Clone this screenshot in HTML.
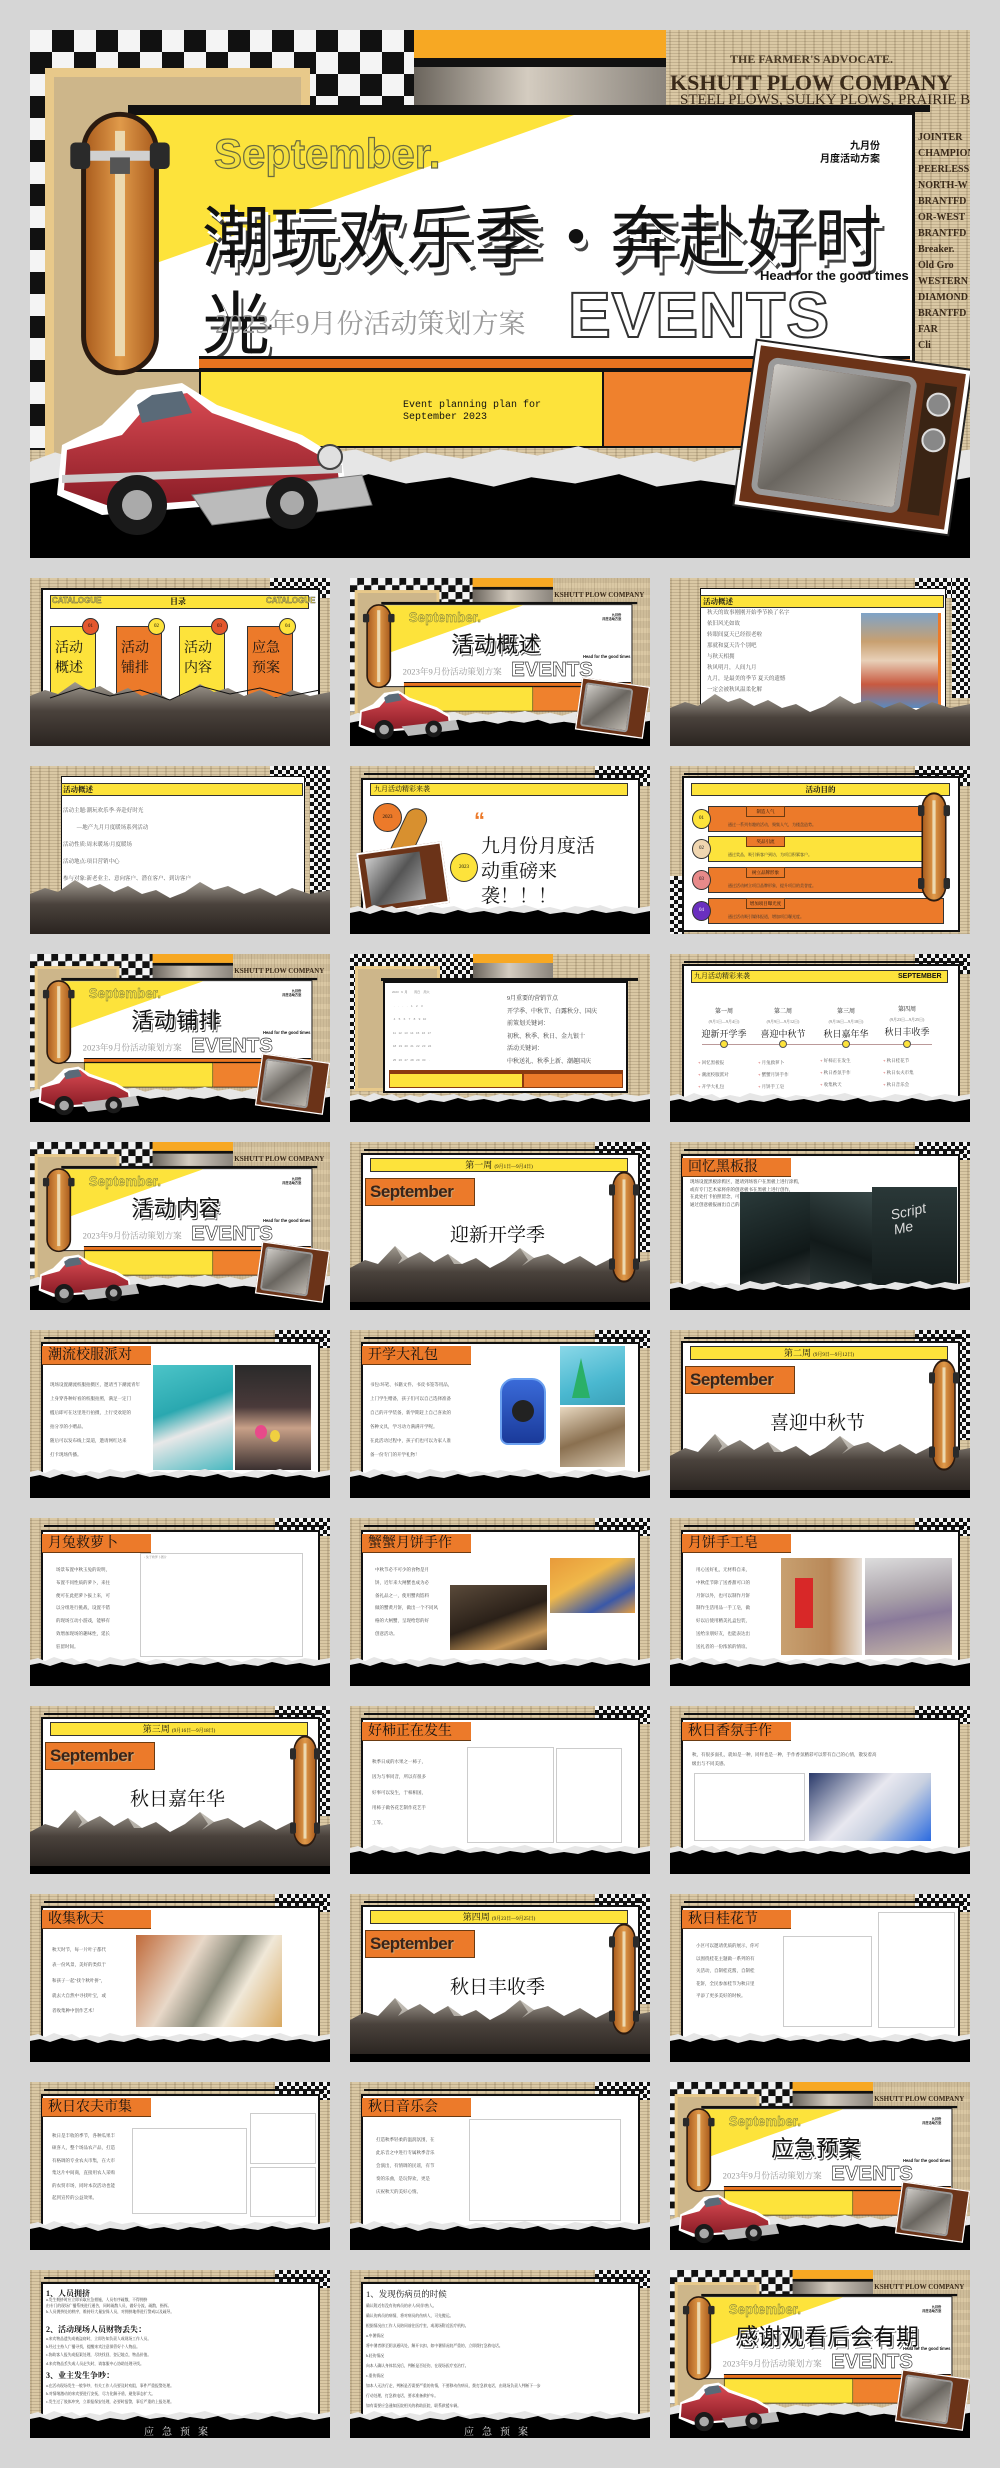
<!DOCTYPE html>
<html><head><meta charset="utf-8">
<style>
*{margin:0;padding:0;box-sizing:border-box}
body{width:1000px;height:2468px;background:#d6d6d6;position:relative;overflow:hidden;font-family:"Liberation Serif","Noto Serif CJK SC","Noto Sans CJK SC",serif;color:#111}
.a{position:absolute}
.s{position:absolute;width:300px;height:168px;overflow:hidden}
.np{background-color:#dac8a4;background-image:repeating-linear-gradient(0deg,rgba(70,50,25,.16) 0 1px,transparent 1px 3px),repeating-linear-gradient(90deg,rgba(70,50,25,.14) 0 2px,transparent 2px 9px)}
.ck{background-image:conic-gradient(#111 0 25%,#f4f4f4 0 50%,#111 0 75%,#f4f4f4 0);background-size:8px 8px}
.ckb{background-image:conic-gradient(#111 0 25%,#f4f4f4 0 50%,#111 0 75%,#f4f4f4 0);background-size:44px 44px}
.card{background:#fff;border:2px solid #111}
.tl{position:absolute;left:14px;top:7px;width:280px;height:4px;border-top:2px solid #111;border-right:2px solid #111}
.ot{position:absolute;left:12px;top:16px;width:109px;height:19px;background:#ec7a2a;border-bottom:1.5px solid #6b3b12;font-size:14px;line-height:19px;padding-left:6px;white-space:nowrap}
.yb{position:absolute;background:#fde33b;border:1.5px solid #333}
.tx{position:absolute;font-size:5.5px;line-height:11px;color:#555;white-space:pre}
.bx{position:absolute;border:1px solid #ccc;background:#fff}
.tr{position:absolute;left:0;top:138px;width:300px;height:30px}
.mt{position:absolute;left:0;width:300px}
.sans{font-family:"Liberation Sans","Noto Sans CJK SC",sans-serif}
.th{position:absolute;width:300px;height:168px;overflow:hidden}
.th .cv{transform:scale(0.31915);transform-origin:0 0}
.cv{position:absolute;left:0;top:0;width:940px;height:528px;overflow:hidden}
.sep{font-family:"Liberation Sans",sans-serif;font-weight:bold;font-size:17px;color:#3a2418;letter-spacing:-.5px;text-shadow:1px 1px 0 #c9a070}
.hd{left:730px;top:238px;font-size:13px;font-weight:bold;white-space:nowrap}
.yr{top:272px;font-size:27px;color:#9a9a9a;white-space:nowrap}
.ev{top:248px;font-size:64px;font-weight:bold;color:#fff;-webkit-text-stroke:2px #333}
.mo{left:780px;top:110px;font-size:10px;font-weight:bold;text-align:right;line-height:13px;width:70px}
</style></head><body>
<svg width="0" height="0" style="position:absolute"><defs>
<linearGradient id="mg" x1="0" y1="0" x2="0" y2="1"><stop offset="0" stop-color="#a09a90"/><stop offset=".45" stop-color="#4a423c"/><stop offset="1" stop-color="#2a2420"/></linearGradient>
<linearGradient id="sk" x1="0" y1="0" x2="1" y2="0"><stop offset="0" stop-color="#a85a1c"/><stop offset=".5" stop-color="#e09a4a"/><stop offset="1" stop-color="#a85a1c"/></linearGradient>
<linearGradient id="cr" x1="0" y1="0" x2="0" y2="1"><stop offset="0" stop-color="#d84a52"/><stop offset="1" stop-color="#8a1c26"/></linearGradient>
</defs></svg>

<!-- ========== HERO ========== -->
<div class="a" style="left:30px;top:30px;width:940px;height:528px;overflow:hidden">
<div class="cv">
 <div class="a np" style="left:0;top:0;width:940px;height:528px"></div>
 <div class="a ckb" style="left:0;top:0;width:385px;height:80px"></div>
 <div class="a ckb" style="left:0;top:0;width:45px;height:420px"></div>
 <div class="a" style="left:15px;top:38px;width:265px;height:400px;background:#cdb68a;border:9px solid #e8c98a"></div>
 <div class="a" style="left:384px;top:0;width:252px;height:28px;background:#f7a823"></div>
 <div class="a" style="left:384px;top:28px;width:252px;height:9px;background:#111"></div>
 <div class="a" style="left:384px;top:37px;width:252px;height:40px;background:linear-gradient(90deg,#6a645c,#d4ccc0 45%,#8a847c)"></div>
 <div class="a" style="left:700px;top:22px;font-size:12px;color:#4a3a26;font-weight:bold">THE FARMER'S ADVOCATE.</div>
 <div class="a" style="left:640px;top:40px;font-size:22px;color:#3a2a1a;font-weight:bold;white-space:nowrap">KSHUTT PLOW COMPANY</div>
 <div class="a" style="left:650px;top:62px;font-size:15px;color:#3a2a1a;white-space:nowrap">STEEL PLOWS, SULKY PLOWS, PRAIRIE BREAK</div>
 <div class="a" style="left:888px;top:100px;font-size:10px;color:#3a2a1a;line-height:16px;font-weight:bold;white-space:nowrap">JOINTER<br>CHAMPION<br>PEERLESS<br>NORTH-W<br>BRANTFD<br>OR-WEST<br>BRANTFD<br>Breaker.<br>Old Gro<br>WESTERN<br>DIAMOND<br>BRANTFD<br>FAR<br>Cli</div>
 <div class="a" style="left:98px;top:75px;width:802px;height:7px;background:#111"></div>
 <div class="a" style="left:98px;top:82px;width:787px;height:260px;background:#fff;border:3px solid #111"></div>
 <div class="a" style="left:101px;top:85px;width:443px;height:157px;background:#fde33b;clip-path:polygon(0 0,100% 0,0 100%)"></div>
 <div class="a sans" style="left:184px;top:100px;font-size:42px;font-weight:bold;color:#f2df3e;-webkit-text-stroke:1.2px #6a6a40">September.</div>
 <div class="a sans mo">九月份<br>月度活动方案</div>
 <div class="a" style="left:172px;top:160px;width:720px;font-size:68px;line-height:86px;font-family:'Noto Sans CJK SC',sans-serif;text-shadow:3px 5px 0 #fff,5px 8px 0 #444">潮玩欢乐季·奔赴好时光</div>
 <div class="a sans hd">Head for the good times</div>
 <div class="a yr" style="left:185px">2023年9月份活动策划方案</div>
 <div class="a sans ev" style="left:538px;letter-spacing:1px">EVENTS</div>
 <div class="a" style="left:169px;top:326px;width:711px;height:14px;background:#e8731f;border-top:3px solid #111;border-bottom:2px solid #111"></div>
 <div class="a" style="left:169px;top:340px;width:405px;height:78px;background:#fde33b;border:2px solid #111"></div>
 <div class="a" style="left:574px;top:340px;width:306px;height:78px;background:#ef812d;border:2px solid #111;border-left:0"></div>
 <div class="a" style="left:373px;top:370px;font-family:'Liberation Mono',monospace;font-size:10px;line-height:12px;white-space:nowrap">Event planning plan for<br>September 2023</div>
 <svg class="a" style="left:0;top:410px" width="940" height="118" viewBox="0 0 300 38" preserveAspectRatio="none"><path fill="#e6e6e6" d="M0 7 L8 4 L15 6 L24 2 L33 5 L42 3 L50 7 L60 4 L70 6 L80 2 L92 5 L104 3 L115 7 L126 4 L138 6 L150 3 L162 5 L175 2 L188 6 L200 4 L212 7 L225 3 L238 5 L250 2 L262 6 L275 3 L288 5 L300 3 V38 H0Z"/><path d="M0 14 L10 12 L20 15 L32 11 L44 14 L56 12 L68 16 L80 13 L94 15 L108 11 L120 14 L134 12 L148 15 L160 12 L174 14 L188 11 L200 15 L214 13 L228 15 L242 11 L256 14 L270 12 L284 15 L300 12 V38 H0Z"/></svg>
 <svg class="a" style="left:40px;top:81px" width="100" height="265" viewBox="0 0 60 160"><rect x="8" y="2" width="44" height="156" rx="22" fill="url(#sk)" stroke="#2a1a10" stroke-width="3"/><rect x="27" y="12" width="6" height="136" fill="#ecd9b0"/><rect x="6" y="24" width="48" height="6" rx="2" fill="#d0d0d0"/><rect x="0" y="19" width="12" height="16" rx="3" fill="#2a2a2a"/><rect x="48" y="19" width="12" height="16" rx="3" fill="#2a2a2a"/><rect x="24" y="28" width="12" height="10" fill="#555"/></svg>
 <svg class="a" style="left:12px;top:335px" width="340" height="175" viewBox="0 0 340 175"><path d="M20 80 L60 60 L95 25 L140 18 L175 40 L260 70 L300 95 L305 130 L60 150 L15 130Z" fill="#fff"/><path d="M25 85 L80 70 L110 35 L145 28 L170 48 L255 78 L295 100 L298 125 L70 142 L22 125Z" fill="url(#cr)"/><path d="M95 40 L110 30 L140 26 L150 48 L100 58Z" fill="#5a6a78"/><path d="M20 110 L300 100 L300 108 L20 118Z" fill="#ccc"/><path d="M150 130 L320 110 L330 140 L170 160Z" fill="#bbb" stroke="#777"/><circle cx="95" cy="140" r="30" fill="#1a1a1a"/><circle cx="95" cy="140" r="15" fill="#aaa"/><circle cx="250" cy="138" r="26" fill="#1a1a1a"/><circle cx="250" cy="138" r="12" fill="#aaa"/><circle cx="288" cy="92" r="12" fill="#e0e0e0" stroke="#444" stroke-width="2"/></svg>
 <div class="a" style="left:715px;top:325px;width:215px;height:165px;transform:rotate(8deg);background:#6b3318;border:4px solid #fff;box-shadow:0 0 0 2px #222">
  <div class="a" style="left:10px;top:10px;width:150px;height:138px;background:linear-gradient(135deg,#d0cdc8,#6a6660 50%,#bdb8b0);border:6px solid #9a9a9a;border-radius:10px"></div>
  <div class="a" style="left:168px;top:14px;width:32px;height:130px;background:#3a2414"><div class="a" style="left:4px;top:8px;width:24px;height:24px;border-radius:50%;background:#888;border:2px solid #ddd"></div><div class="a" style="left:4px;top:44px;width:24px;height:24px;border-radius:50%;background:#888;border:2px solid #ddd"></div></div>
 </div>
</div></div>

<!-- ================= ROW 0 ================= -->
<div class="s np" style="left:30px;top:578px">
 <div class="a ck" style="left:240px;top:0;width:60px;height:20px"></div>
 <div class="a card" style="left:11px;top:10px;width:279px;height:140px"></div>
 <div class="yb" style="left:20px;top:17px;width:259px;height:14px"></div>
 <div class="a sans" style="left:22px;top:18px;font-size:8px;font-weight:bold;color:#f2df3e;-webkit-text-stroke:.4px #555">CATALOGUE</div>
 <div class="a sans" style="left:236px;top:18px;font-size:8px;font-weight:bold;color:#f2df3e;-webkit-text-stroke:.4px #555">CATALOGUE</div>
 <div class="a" style="left:140px;top:17px;font-size:8px;font-weight:bold;line-height:14px">目录</div>
 <div class="a" style="left:20px;top:48px;width:46px;height:72px;background:#fde33b;border:1px solid #333;font-size:14px;line-height:20px;padding:12px 0 0 4px">活动<br>概述</div>
 <div class="a" style="left:86px;top:48px;width:46px;height:72px;background:#ec7a2a;border:1px solid #333;font-size:14px;line-height:20px;padding:12px 0 0 4px">活动<br>铺排</div>
 <div class="a" style="left:149px;top:48px;width:46px;height:72px;background:#fde33b;border:1px solid #333;font-size:14px;line-height:20px;padding:12px 0 0 4px">活动<br>内容</div>
 <div class="a" style="left:217px;top:48px;width:46px;height:72px;background:#ec7a2a;border:1px solid #333;font-size:14px;line-height:20px;padding:12px 0 0 4px">应急<br>预案</div>
 <div class="a" style="left:52px;top:40px;width:17px;height:17px;border-radius:50%;background:#e4572e;border:1px solid #333;font-size:5px;text-align:center;line-height:15px">01</div>
 <div class="a" style="left:118px;top:40px;width:17px;height:17px;border-radius:50%;background:#fde33b;border:1px solid #333;font-size:5px;text-align:center;line-height:15px">02</div>
 <div class="a" style="left:181px;top:40px;width:17px;height:17px;border-radius:50%;background:#e4572e;border:1px solid #333;font-size:5px;text-align:center;line-height:15px">03</div>
 <div class="a" style="left:249px;top:40px;width:17px;height:17px;border-radius:50%;background:#fde33b;border:1px solid #333;font-size:5px;text-align:center;line-height:15px">04</div>
 <svg class="mt" style="top:100px;height:68px" viewBox="0 0 300 68" preserveAspectRatio="none"><path fill="url(#mg)" d="M0 18 L15 12 L28 16 L45 4 L58 12 L70 8 L84 16 L98 10 L112 18 L126 14 L140 22 L155 16 L170 6 L184 14 L198 10 L214 18 L230 12 L246 20 L262 12 L280 18 L300 14 V68 H0Z"/><path fill="none" stroke="#111" stroke-width="1" d="M20 20 L50 10 L80 18 L110 12 L140 22 L170 8 L200 16 L230 10 L260 18 L290 12"/></svg>
</div>

<div class="th" style="left:350px;top:578px"><div class="cv">
 <div class="a np" style="left:0;top:0;width:940px;height:528px"></div>
 <div class="a ckb" style="left:0;top:0;width:385px;height:80px"></div>
 <div class="a ckb" style="left:0;top:0;width:45px;height:420px"></div>
 <div class="a" style="left:15px;top:38px;width:265px;height:400px;background:#cdb68a;border:9px solid #e8c98a"></div>
 <div class="a" style="left:384px;top:0;width:252px;height:28px;background:#f7a823"></div>
 <div class="a" style="left:384px;top:28px;width:252px;height:9px;background:#111"></div>
 <div class="a" style="left:384px;top:37px;width:252px;height:40px;background:linear-gradient(90deg,#6a645c,#d4ccc0 45%,#8a847c)"></div>
 <div class="a" style="left:640px;top:40px;font-size:22px;color:#3a2a1a;font-weight:bold;white-space:nowrap">KSHUTT PLOW COMPANY</div>
 <div class="a" style="left:98px;top:75px;width:802px;height:7px;background:#111"></div>
 <div class="a" style="left:98px;top:82px;width:787px;height:260px;background:#fff;border:3px solid #111"></div>
 <div class="a" style="left:101px;top:85px;width:443px;height:157px;background:#fde33b;clip-path:polygon(0 0,100% 0,0 100%)"></div>
 <div class="a sans" style="left:184px;top:100px;font-size:42px;font-weight:bold;color:#f2df3e;-webkit-text-stroke:1.2px #6a6a40">September.</div>
 <div class="a sans mo">九月份<br>月度活动方案</div>
 <div class="a" style="left:172px;top:160px;width:570px;text-align:center;font-size:70px;line-height:86px;font-family:'Noto Sans CJK SC',sans-serif;text-shadow:3px 5px 0 #fff,5px 8px 0 #444">活动概述</div>
 <div class="a sans hd">Head for the good times</div>
 <div class="a yr" style="left:165px">2023年9月份活动策划方案</div>
 <div class="a sans ev" style="left:505px">EVENTS</div>
 <div class="a" style="left:169px;top:326px;width:711px;height:14px;background:#e8731f;border-top:3px solid #111;border-bottom:2px solid #111"></div>
 <div class="a" style="left:169px;top:340px;width:405px;height:78px;background:#fde33b;border:2px solid #111"></div>
 <div class="a" style="left:574px;top:340px;width:306px;height:78px;background:#ef812d;border:2px solid #111;border-left:0"></div>
 <svg class="a" style="left:0;top:410px" width="940" height="118" viewBox="0 0 300 38" preserveAspectRatio="none"><path fill="#e6e6e6" d="M0 7 L8 4 L15 6 L24 2 L33 5 L42 3 L50 7 L60 4 L70 6 L80 2 L92 5 L104 3 L115 7 L126 4 L138 6 L150 3 L162 5 L175 2 L188 6 L200 4 L212 7 L225 3 L238 5 L250 2 L262 6 L275 3 L288 5 L300 3 V38 H0Z"/><path d="M0 14 L10 12 L20 15 L32 11 L44 14 L56 12 L68 16 L80 13 L94 15 L108 11 L120 14 L134 12 L148 15 L160 12 L174 14 L188 11 L200 15 L214 13 L228 15 L242 11 L256 14 L270 12 L284 15 L300 12 V38 H0Z"/></svg>
 <svg class="a" style="left:40px;top:81px" width="100" height="265" viewBox="0 0 60 160"><rect x="8" y="2" width="44" height="156" rx="22" fill="url(#sk)" stroke="#2a1a10" stroke-width="3"/><rect x="27" y="12" width="6" height="136" fill="#ecd9b0"/><rect x="0" y="19" width="12" height="16" rx="3" fill="#2a2a2a"/><rect x="48" y="19" width="12" height="16" rx="3" fill="#2a2a2a"/></svg>
 <svg class="a" style="left:12px;top:335px" width="340" height="175" viewBox="0 0 340 175"><path d="M20 80 L60 60 L95 25 L140 18 L175 40 L260 70 L300 95 L305 130 L60 150 L15 130Z" fill="#fff"/><path d="M25 85 L80 70 L110 35 L145 28 L170 48 L255 78 L295 100 L298 125 L70 142 L22 125Z" fill="url(#cr)"/><path d="M95 40 L110 30 L140 26 L150 48 L100 58Z" fill="#5a6a78"/><path d="M150 130 L320 110 L330 140 L170 160Z" fill="#bbb"/><circle cx="95" cy="140" r="30" fill="#1a1a1a"/><circle cx="95" cy="140" r="15" fill="#aaa"/><circle cx="250" cy="138" r="26" fill="#1a1a1a"/><circle cx="250" cy="138" r="12" fill="#aaa"/></svg>
 <div class="a" style="left:715px;top:325px;width:215px;height:165px;transform:rotate(8deg);background:#6b3318;border:4px solid #fff"><div class="a" style="left:10px;top:10px;width:150px;height:138px;background:linear-gradient(135deg,#d0cdc8,#6a6660 50%,#bdb8b0);border:6px solid #9a9a9a;border-radius:10px"></div></div>
</div></div>

<div class="s np" style="left:670px;top:578px">
 <div class="a ck" style="left:245px;top:0;width:55px;height:20px"></div>
 <div class="a ck" style="left:282px;top:0;width:18px;height:120px"></div>
 <div class="a card" style="left:30px;top:10px;width:246px;height:140px;border-width:1px"></div>
 <div class="yb" style="left:30px;top:17px;width:244px;height:13px"></div>
 <div class="a" style="left:33px;top:17px;font-size:7.5px;font-weight:bold;line-height:13px">活动概述</div>
 <div class="tx" style="left:37px;top:30px">秋天的故事刚刚开始季节换了名字
依旧风光如故
转眼间夏天已经很老啦
那就和夏天告个别吧
与秋天相拥
秋风明月，人间九月
九月，是最美的季节 夏天的遗憾
一定会被秋风温柔化解</div>
 <div class="a" style="left:191px;top:35px;width:80px;height:95px;background:linear-gradient(180deg,#7ea3c8 0,#c8a070 30%,#e8d0b8 50%,#c85a40 75%,#5a8ac0);border-right:3px solid #ec7a2a"></div>
 <svg class="mt" style="top:112px;height:56px" viewBox="0 0 300 56" preserveAspectRatio="none"><path fill="url(#mg)" d="M0 18 L15 12 L28 16 L45 4 L58 12 L70 8 L84 16 L98 10 L112 18 L126 14 L140 22 L155 16 L170 6 L184 14 L198 10 L214 18 L230 12 L246 20 L262 12 L280 18 L300 14 V56 H0Z"/></svg>
</div>

<!-- ================= ROW 1 ================= -->
<div class="s np" style="left:30px;top:766px">
 <div class="a ck" style="left:240px;top:0;width:60px;height:20px"></div>
 <div class="a ck" style="left:280px;top:0;width:20px;height:130px"></div>
 <div class="a card" style="left:31px;top:10px;width:244px;height:140px;border-width:1px"></div>
 <div class="yb" style="left:31px;top:17px;width:242px;height:13px"></div>
 <div class="a" style="left:33px;top:17px;font-size:7.5px;font-weight:bold;line-height:13px">活动概述</div>
 <div class="tx" style="left:33px;top:37px;line-height:17px">活动主题:潮玩欢乐季·奔赴好时光
          —地产九月月度暖场系列活动
活动性质:周末暖场/月度暖场
活动地点:项目营销中心
参与对象:新老业主、意向客户、潜在客户、到访客户</div>
 <svg class="mt" style="top:108px;height:60px" viewBox="0 0 300 60" preserveAspectRatio="none"><path fill="url(#mg)" d="M0 20 L15 14 L28 18 L45 6 L58 14 L70 10 L84 18 L98 12 L112 20 L126 16 L140 24 L155 18 L170 8 L184 16 L198 12 L214 20 L230 14 L246 22 L262 14 L280 20 L300 16 V60 H0Z"/></svg>
</div>

<div class="s np" style="left:350px;top:766px">
 <div class="a ck" style="left:245px;top:0;width:55px;height:20px"></div>
 <div class="tl"></div>
 <div class="a card" style="left:11px;top:12px;width:279px;height:135px"></div>
 <div class="yb" style="left:20px;top:17px;width:258px;height:13px"></div>
 <div class="a" style="left:24px;top:17px;font-size:7px;line-height:13px">九月活动精彩来袭</div>
 <div class="a" style="left:23px;top:37px;width:29px;height:29px;border-radius:50%;background:#ec7a2a;border:1px solid #333;font-size:5px;text-align:center;line-height:27px">2023</div>
 <div class="a" style="left:45px;top:40px;width:22px;height:70px;background:#d8902f;border:1.5px solid #333;border-radius:11px;transform:rotate(25deg)"></div>
 <div class="a" style="left:10px;top:81px;width:86px;height:62px;background:#6b3318;border:2px solid #fff;transform:rotate(-8deg)"><div class="a" style="left:6px;top:5px;width:55px;height:48px;background:linear-gradient(135deg,#ccc,#555 50%,#aaa)"></div></div>
 <div class="a" style="left:100px;top:87px;width:28px;height:29px;border-radius:50%;background:#fde33b;border:1px solid #333;font-size:5px;text-align:center;line-height:27px">2023</div>
 <div class="a sans" style="left:124px;top:42px;font-size:22px;font-weight:bold;color:#ec7a2a">“</div>
 <div class="a" style="left:131px;top:68px;font-size:19px;line-height:25px;width:125px">九月份月度活<br>动重磅来<br>袭！！！</div>
 <svg class="tr" viewBox="0 0 300 30" preserveAspectRatio="none"><path fill="#e6e6e6" d="M0 4 L8 2 L15 5 L24 1 L33 4 L42 2 L50 6 L60 3 L70 5 L80 1 L92 4 L104 2 L115 6 L126 3 L138 5 L150 2 L162 4 L175 1 L188 5 L200 3 L212 6 L225 2 L238 4 L250 1 L262 5 L275 2 L288 4 L300 2 V30 H0Z"/><path d="M0 9 L10 7 L20 10 L32 6 L44 9 L56 7 L68 11 L80 8 L94 10 L108 6 L120 9 L134 7 L148 10 L160 7 L174 9 L188 6 L200 10 L214 8 L228 10 L242 6 L256 9 L270 7 L284 10 L300 7 V30 H0Z"/></svg>
</div>

<div class="s np" style="left:670px;top:766px">
 <div class="a ck" style="left:245px;top:0;width:55px;height:20px"></div>
 <div class="a ck" style="left:0;top:110px;width:14px;height:58px"></div>
 <div class="tl"></div>
 <div class="a card" style="left:12px;top:10px;width:278px;height:156px"></div>
 <div class="yb" style="left:21px;top:17px;width:259px;height:13px"></div>
 <div class="a" style="left:21px;top:17px;width:259px;text-align:center;font-size:7.5px;font-weight:bold;line-height:13px">活动目的</div>
 <div class="a" style="left:38px;top:40px;width:236px;height:26px;background:#ec7a2a;border:1px solid #333"></div>
 <div class="a" style="left:38px;top:70px;width:236px;height:26px;background:#fde33b;border:1px solid #333"></div>
 <div class="a" style="left:38px;top:101px;width:236px;height:26px;background:#ec7a2a;border:1px solid #333"></div>
 <div class="a" style="left:38px;top:132px;width:236px;height:26px;background:#ec7a2a;border:1px solid #333"></div>
 <div class="a" style="left:76px;top:40px;width:39px;height:11px;background:#ec7a2a;border:1px solid #6b3b12;font-size:4.5px;text-align:center;line-height:9px">制造人气</div>
 <div class="a" style="left:76px;top:70px;width:39px;height:11px;background:#ec7a2a;border:1px solid #6b3b12;font-size:4.5px;text-align:center;line-height:9px">奖品引流</div>
 <div class="a" style="left:76px;top:101px;width:39px;height:11px;background:#ec7a2a;border:1px solid #6b3b12;font-size:4.5px;text-align:center;line-height:9px">树立品牌形象</div>
 <div class="a" style="left:76px;top:132px;width:39px;height:11px;background:#ec7a2a;border:1px solid #6b3b12;font-size:4.5px;text-align:center;line-height:9px">增加项目曝光度</div>
 <div class="tx" style="left:58px;top:53px;font-size:4px;color:#333">通过一系列有趣的活动，聚集人气，为楼盘造势。</div>
 <div class="tx" style="left:58px;top:83px;font-size:4px;color:#333">通过奖品，吸引新客户到访，为项目积累客户。</div>
 <div class="tx" style="left:58px;top:114px;font-size:4px;color:#333">通过活动树立项目品牌形象，提升项目的美誉度。</div>
 <div class="tx" style="left:58px;top:145px;font-size:4px;color:#333">通过活动吸引媒体报道，增加项目曝光度。</div>
 <div class="a" style="left:22px;top:43px;width:19px;height:20px;border-radius:50%;background:#fde33b;border:1px solid #333;font-size:5px;text-align:center;line-height:18px">01</div>
 <div class="a" style="left:22px;top:73px;width:19px;height:20px;border-radius:50%;background:#f0d6b0;border:1px solid #333;font-size:5px;text-align:center;line-height:18px">02</div>
 <div class="a" style="left:22px;top:104px;width:19px;height:20px;border-radius:50%;background:#e88a8a;border:1px solid #333;font-size:5px;text-align:center;line-height:18px">03</div>
 <div class="a" style="left:22px;top:135px;width:19px;height:20px;border-radius:50%;background:#6a2fbf;border:1px solid #333;font-size:5px;text-align:center;line-height:18px;color:#fff">04</div>
 <svg class="a" style="left:248px;top:26px" width="32" height="110" viewBox="0 0 60 160" preserveAspectRatio="none"><rect x="8" y="2" width="44" height="156" rx="22" fill="url(#sk)" stroke="#2a1a10" stroke-width="3"/><rect x="27" y="12" width="6" height="136" fill="#ecd9b0"/><rect x="0" y="19" width="12" height="16" rx="3" fill="#2a2a2a"/><rect x="48" y="19" width="12" height="16" rx="3" fill="#2a2a2a"/><rect x="0" y="125" width="12" height="16" rx="3" fill="#2a2a2a"/><rect x="48" y="125" width="12" height="16" rx="3" fill="#2a2a2a"/></svg>
</div>

<!-- ================= ROW 2 ================= -->
<div class="th" style="left:30px;top:954px"><div class="cv">
 <div class="a np" style="left:0;top:0;width:940px;height:528px"></div>
 <div class="a ckb" style="left:0;top:0;width:385px;height:80px"></div>
 <div class="a ckb" style="left:0;top:0;width:45px;height:420px"></div>
 <div class="a" style="left:15px;top:38px;width:265px;height:400px;background:#cdb68a;border:9px solid #e8c98a"></div>
 <div class="a" style="left:384px;top:0;width:252px;height:28px;background:#f7a823"></div>
 <div class="a" style="left:384px;top:28px;width:252px;height:9px;background:#111"></div>
 <div class="a" style="left:384px;top:37px;width:252px;height:40px;background:linear-gradient(90deg,#6a645c,#d4ccc0 45%,#8a847c)"></div>
 <div class="a" style="left:640px;top:40px;font-size:22px;color:#3a2a1a;font-weight:bold;white-space:nowrap">KSHUTT PLOW COMPANY</div>
 <div class="a" style="left:98px;top:75px;width:802px;height:7px;background:#111"></div>
 <div class="a" style="left:98px;top:82px;width:787px;height:260px;background:#fff;border:3px solid #111"></div>
 <div class="a" style="left:101px;top:85px;width:443px;height:157px;background:#fde33b;clip-path:polygon(0 0,100% 0,0 100%)"></div>
 <div class="a sans" style="left:184px;top:100px;font-size:42px;font-weight:bold;color:#f2df3e;-webkit-text-stroke:1.2px #6a6a40">September.</div>
 <div class="a sans mo">九月份<br>月度活动方案</div>
 <div class="a" style="left:172px;top:160px;width:570px;text-align:center;font-size:70px;line-height:86px;font-family:'Noto Sans CJK SC',sans-serif;text-shadow:3px 5px 0 #fff,5px 8px 0 #444">活动铺排</div>
 <div class="a sans hd">Head for the good times</div>
 <div class="a yr" style="left:165px">2023年9月份活动策划方案</div>
 <div class="a sans ev" style="left:505px">EVENTS</div>
 <div class="a" style="left:169px;top:326px;width:711px;height:14px;background:#e8731f;border-top:3px solid #111;border-bottom:2px solid #111"></div>
 <div class="a" style="left:169px;top:340px;width:405px;height:78px;background:#fde33b;border:2px solid #111"></div>
 <div class="a" style="left:574px;top:340px;width:306px;height:78px;background:#ef812d;border:2px solid #111;border-left:0"></div>
 <svg class="a" style="left:0;top:410px" width="940" height="118" viewBox="0 0 300 38" preserveAspectRatio="none"><path fill="#e6e6e6" d="M0 7 L8 4 L15 6 L24 2 L33 5 L42 3 L50 7 L60 4 L70 6 L80 2 L92 5 L104 3 L115 7 L126 4 L138 6 L150 3 L162 5 L175 2 L188 6 L200 4 L212 7 L225 3 L238 5 L250 2 L262 6 L275 3 L288 5 L300 3 V38 H0Z"/><path d="M0 14 L10 12 L20 15 L32 11 L44 14 L56 12 L68 16 L80 13 L94 15 L108 11 L120 14 L134 12 L148 15 L160 12 L174 14 L188 11 L200 15 L214 13 L228 15 L242 11 L256 14 L270 12 L284 15 L300 12 V38 H0Z"/></svg>
 <svg class="a" style="left:40px;top:81px" width="100" height="265" viewBox="0 0 60 160"><rect x="8" y="2" width="44" height="156" rx="22" fill="url(#sk)" stroke="#2a1a10" stroke-width="3"/><rect x="27" y="12" width="6" height="136" fill="#ecd9b0"/><rect x="0" y="19" width="12" height="16" rx="3" fill="#2a2a2a"/><rect x="48" y="19" width="12" height="16" rx="3" fill="#2a2a2a"/></svg>
 <svg class="a" style="left:12px;top:335px" width="340" height="175" viewBox="0 0 340 175"><path d="M20 80 L60 60 L95 25 L140 18 L175 40 L260 70 L300 95 L305 130 L60 150 L15 130Z" fill="#fff"/><path d="M25 85 L80 70 L110 35 L145 28 L170 48 L255 78 L295 100 L298 125 L70 142 L22 125Z" fill="url(#cr)"/><path d="M95 40 L110 30 L140 26 L150 48 L100 58Z" fill="#5a6a78"/><path d="M150 130 L320 110 L330 140 L170 160Z" fill="#bbb"/><circle cx="95" cy="140" r="30" fill="#1a1a1a"/><circle cx="95" cy="140" r="15" fill="#aaa"/><circle cx="250" cy="138" r="26" fill="#1a1a1a"/><circle cx="250" cy="138" r="12" fill="#aaa"/></svg>
 <div class="a" style="left:715px;top:325px;width:215px;height:165px;transform:rotate(8deg);background:#6b3318;border:4px solid #fff"><div class="a" style="left:10px;top:10px;width:150px;height:138px;background:linear-gradient(135deg,#d0cdc8,#6a6660 50%,#bdb8b0);border:6px solid #9a9a9a;border-radius:10px"></div></div>
</div></div>

<div class="s np" style="left:350px;top:954px">
 <div class="a ck" style="left:0;top:0;width:123px;height:26px"></div>
 <div class="a ck" style="left:0;top:0;width:14px;height:135px"></div>
 <div class="a" style="left:5px;top:12px;width:85px;height:125px;background:#cdb68a;border:3px solid #e8c98a"></div>
 <div class="a" style="left:123px;top:0;width:80px;height:9px;background:#f7a823"></div>
 <div class="a" style="left:123px;top:9px;width:80px;height:16px;background:linear-gradient(90deg,#6a645c,#d4ccc0 45%,#8a847c)"></div>
 <div class="a" style="left:31px;top:24px;width:257px;height:3px;background:#111"></div>
 <div class="a card" style="left:33px;top:27px;width:245px;height:112px"></div>
 <div class="a sans" style="left:42px;top:32px;font-size:3px;color:#888;white-space:pre;line-height:13.5px">2023   9  月        周日    周六
  ·    ·    ·    ·    1    2    3
  4    5    6    7    8    9   10
 11   12   13   14   15   16   17
 18   19   20   21   22   23   24
 25   26   27   28   29   30    ·</div>
 <div class="tx" style="left:157px;top:39px;font-size:6px;line-height:12.5px;color:#333">9月重要的营销节点
开学季、中秋节、白露秋分、国庆
前策划关键词：
初秋、秋季、秋日、金九银十
活动关键词：
中秋送礼、秋季上新、潮趣国庆</div>
 <div class="a" style="left:39px;top:116px;width:234px;height:3px;background:#8a3a10"></div>
 <div class="a" style="left:39px;top:119px;width:134px;height:15px;background:#fde33b;border:1px solid #8a3a10"></div>
 <div class="a" style="left:173px;top:119px;width:100px;height:15px;background:#ec7a2a;border:1px solid #8a3a10"></div>
 <svg class="tr" viewBox="0 0 300 30" preserveAspectRatio="none"><path fill="#e6e6e6" d="M0 4 L8 2 L15 5 L24 1 L33 4 L42 2 L50 6 L60 3 L70 5 L80 1 L92 4 L104 2 L115 6 L126 3 L138 5 L150 2 L162 4 L175 1 L188 5 L200 3 L212 6 L225 2 L238 4 L250 1 L262 5 L275 2 L288 4 L300 2 V30 H0Z"/><path d="M0 9 L10 7 L20 10 L32 6 L44 9 L56 7 L68 11 L80 8 L94 10 L108 6 L120 9 L134 7 L148 10 L160 7 L174 9 L188 6 L200 10 L214 8 L228 10 L242 6 L256 9 L270 7 L284 10 L300 7 V30 H0Z"/></svg>
</div>

<div class="s np" style="left:670px;top:954px">
 <div class="a ck" style="left:245px;top:0;width:55px;height:20px"></div>
 <div class="tl"></div>
 <div class="a card" style="left:12px;top:10px;width:278px;height:136px"></div>
 <div class="yb" style="left:21px;top:16px;width:257px;height:13px"></div>
 <div class="a" style="left:24px;top:16px;font-size:7px;line-height:13px">九月活动精彩来袭</div>
 <div class="a sans" style="left:228px;top:16px;font-size:7px;font-weight:bold;line-height:13px">SEPTEMBER</div>
 <div class="a" style="left:24px;top:54px;width:60px;text-align:center;font-size:6px;line-height:9px">第一周<br><span style="font-size:4px;color:#666">(9月1日—9月4日)</span></div>
 <div class="a" style="left:83px;top:54px;width:60px;text-align:center;font-size:6px;line-height:9px">第二周<br><span style="font-size:4px;color:#666">(9月9日—9月12日)</span></div>
 <div class="a" style="left:146px;top:54px;width:60px;text-align:center;font-size:6px;line-height:9px">第三周<br><span style="font-size:4px;color:#666">(9月16日—9月18日)</span></div>
 <div class="a" style="left:207px;top:52px;width:60px;text-align:center;font-size:6px;line-height:9px">第四周<br><span style="font-size:4px;color:#666">(9月23日—9月25日)</span></div>
 <div class="a" style="left:24px;top:73px;width:60px;text-align:center;font-size:9px">迎新开学季</div>
 <div class="a" style="left:83px;top:73px;width:60px;text-align:center;font-size:9px">喜迎中秋节</div>
 <div class="a" style="left:146px;top:73px;width:60px;text-align:center;font-size:9px">秋日嘉年华</div>
 <div class="a" style="left:207px;top:71px;width:60px;text-align:center;font-size:9px">秋日丰收季</div>
 <div class="a" style="left:32px;top:90px;width:230px;height:1px;background:#b99"></div>
 <div class="a" style="left:50px;top:86px;width:8px;height:8px;border-radius:50%;background:#fde33b;border:1px solid #555"></div>
 <div class="a" style="left:109px;top:86px;width:8px;height:8px;border-radius:50%;background:#fde33b;border:1px solid #555"></div>
 <div class="a" style="left:172px;top:86px;width:8px;height:8px;border-radius:50%;background:#fde33b;border:1px solid #555"></div>
 <div class="a" style="left:233px;top:86px;width:8px;height:8px;border-radius:50%;background:#fde33b;border:1px solid #555"></div>
 <div class="tx" style="left:28px;top:103px;font-size:4.5px;line-height:12px"><span style="color:#c33">+</span> 回忆黑板报
<span style="color:#c33">+</span> 潮流校服派对
<span style="color:#c33">+</span> 开学大礼包</div>
 <div class="tx" style="left:88px;top:103px;font-size:4.5px;line-height:12px"><span style="color:#c33">+</span> 月兔救萝卜
<span style="color:#c33">+</span> 蟹蟹月饼手作
<span style="color:#c33">+</span> 月饼手工皂</div>
 <div class="tx" style="left:150px;top:101px;font-size:4.5px;line-height:12px"><span style="color:#c33">+</span> 好柿正在发生
<span style="color:#c33">+</span> 秋日香氛手作
<span style="color:#c33">+</span> 收集秋天</div>
 <div class="tx" style="left:213px;top:101px;font-size:4.5px;line-height:12px"><span style="color:#c33">+</span> 秋日桂花节
<span style="color:#c33">+</span> 秋日农夫市集
<span style="color:#c33">+</span> 秋日音乐会</div>
 <svg class="tr" viewBox="0 0 300 30" preserveAspectRatio="none"><path fill="#e6e6e6" d="M0 4 L8 2 L15 5 L24 1 L33 4 L42 2 L50 6 L60 3 L70 5 L80 1 L92 4 L104 2 L115 6 L126 3 L138 5 L150 2 L162 4 L175 1 L188 5 L200 3 L212 6 L225 2 L238 4 L250 1 L262 5 L275 2 L288 4 L300 2 V30 H0Z"/><path d="M0 9 L10 7 L20 10 L32 6 L44 9 L56 7 L68 11 L80 8 L94 10 L108 6 L120 9 L134 7 L148 10 L160 7 L174 9 L188 6 L200 10 L214 8 L228 10 L242 6 L256 9 L270 7 L284 10 L300 7 V30 H0Z"/></svg>
</div>

<!-- ================= ROW 3 ================= -->
<div class="th" style="left:30px;top:1142px"><div class="cv">
 <div class="a np" style="left:0;top:0;width:940px;height:528px"></div>
 <div class="a ckb" style="left:0;top:0;width:385px;height:80px"></div>
 <div class="a ckb" style="left:0;top:0;width:45px;height:420px"></div>
 <div class="a" style="left:15px;top:38px;width:265px;height:400px;background:#cdb68a;border:9px solid #e8c98a"></div>
 <div class="a" style="left:384px;top:0;width:252px;height:28px;background:#f7a823"></div>
 <div class="a" style="left:384px;top:28px;width:252px;height:9px;background:#111"></div>
 <div class="a" style="left:384px;top:37px;width:252px;height:40px;background:linear-gradient(90deg,#6a645c,#d4ccc0 45%,#8a847c)"></div>
 <div class="a" style="left:640px;top:40px;font-size:22px;color:#3a2a1a;font-weight:bold;white-space:nowrap">KSHUTT PLOW COMPANY</div>
 <div class="a" style="left:98px;top:75px;width:802px;height:7px;background:#111"></div>
 <div class="a" style="left:98px;top:82px;width:787px;height:260px;background:#fff;border:3px solid #111"></div>
 <div class="a" style="left:101px;top:85px;width:443px;height:157px;background:#fde33b;clip-path:polygon(0 0,100% 0,0 100%)"></div>
 <div class="a sans" style="left:184px;top:100px;font-size:42px;font-weight:bold;color:#f2df3e;-webkit-text-stroke:1.2px #6a6a40">September.</div>
 <div class="a sans mo">九月份<br>月度活动方案</div>
 <div class="a" style="left:172px;top:160px;width:570px;text-align:center;font-size:70px;line-height:86px;font-family:'Noto Sans CJK SC',sans-serif;text-shadow:3px 5px 0 #fff,5px 8px 0 #444">活动内容</div>
 <div class="a sans hd">Head for the good times</div>
 <div class="a yr" style="left:165px">2023年9月份活动策划方案</div>
 <div class="a sans ev" style="left:505px">EVENTS</div>
 <div class="a" style="left:169px;top:326px;width:711px;height:14px;background:#e8731f;border-top:3px solid #111;border-bottom:2px solid #111"></div>
 <div class="a" style="left:169px;top:340px;width:405px;height:78px;background:#fde33b;border:2px solid #111"></div>
 <div class="a" style="left:574px;top:340px;width:306px;height:78px;background:#ef812d;border:2px solid #111;border-left:0"></div>
 <svg class="a" style="left:0;top:410px" width="940" height="118" viewBox="0 0 300 38" preserveAspectRatio="none"><path fill="#e6e6e6" d="M0 7 L8 4 L15 6 L24 2 L33 5 L42 3 L50 7 L60 4 L70 6 L80 2 L92 5 L104 3 L115 7 L126 4 L138 6 L150 3 L162 5 L175 2 L188 6 L200 4 L212 7 L225 3 L238 5 L250 2 L262 6 L275 3 L288 5 L300 3 V38 H0Z"/><path d="M0 14 L10 12 L20 15 L32 11 L44 14 L56 12 L68 16 L80 13 L94 15 L108 11 L120 14 L134 12 L148 15 L160 12 L174 14 L188 11 L200 15 L214 13 L228 15 L242 11 L256 14 L270 12 L284 15 L300 12 V38 H0Z"/></svg>
 <svg class="a" style="left:40px;top:81px" width="100" height="265" viewBox="0 0 60 160"><rect x="8" y="2" width="44" height="156" rx="22" fill="url(#sk)" stroke="#2a1a10" stroke-width="3"/><rect x="27" y="12" width="6" height="136" fill="#ecd9b0"/><rect x="0" y="19" width="12" height="16" rx="3" fill="#2a2a2a"/><rect x="48" y="19" width="12" height="16" rx="3" fill="#2a2a2a"/></svg>
 <svg class="a" style="left:12px;top:335px" width="340" height="175" viewBox="0 0 340 175"><path d="M20 80 L60 60 L95 25 L140 18 L175 40 L260 70 L300 95 L305 130 L60 150 L15 130Z" fill="#fff"/><path d="M25 85 L80 70 L110 35 L145 28 L170 48 L255 78 L295 100 L298 125 L70 142 L22 125Z" fill="url(#cr)"/><path d="M95 40 L110 30 L140 26 L150 48 L100 58Z" fill="#5a6a78"/><path d="M150 130 L320 110 L330 140 L170 160Z" fill="#bbb"/><circle cx="95" cy="140" r="30" fill="#1a1a1a"/><circle cx="95" cy="140" r="15" fill="#aaa"/><circle cx="250" cy="138" r="26" fill="#1a1a1a"/><circle cx="250" cy="138" r="12" fill="#aaa"/></svg>
 <div class="a" style="left:715px;top:325px;width:215px;height:165px;transform:rotate(8deg);background:#6b3318;border:4px solid #fff"><div class="a" style="left:10px;top:10px;width:150px;height:138px;background:linear-gradient(135deg,#d0cdc8,#6a6660 50%,#bdb8b0);border:6px solid #9a9a9a;border-radius:10px"></div></div>
</div></div>

<div class="s np" style="left:350px;top:1142px">
 <div class="a ck" style="left:245px;top:0;width:55px;height:18px"></div>
 <div class="a ck" style="left:288px;top:0;width:12px;height:110px"></div>
 <div class="tl"></div>
 <div class="a card" style="left:11px;top:11px;width:279px;height:150px"></div>
 <div class="yb" style="left:20px;top:16px;width:258px;height:14px;text-align:center;font-size:9px;line-height:12px">第一周 <span style="font-size:5px">(9月1日—9月4日)</span></div>
 <div class="a sep" style="left:15px;top:36px;width:110px;height:28px;background:#ec7a2a;border:1px solid #6b3b12;line-height:26px;padding-left:4px">September</div>
 <div class="a" style="left:60px;top:78px;width:175px;text-align:center;font-size:19px">迎新开学季</div>
 <svg class="mt" style="top:100px;height:62px" viewBox="0 0 300 62" preserveAspectRatio="none"><path fill="url(#mg)" d="M0 26 L15 18 L28 22 L45 4 L58 16 L70 10 L84 20 L98 12 L112 22 L126 16 L140 26 L155 18 L170 6 L184 16 L198 12 L214 22 L230 14 L246 24 L262 16 L280 22 L300 18 V62 H0Z"/><path fill="#e6e2da" opacity=".6" d="M45 4 L52 16 L48 22 L58 16Z M170 6 L178 18 L172 24 L184 16Z M98 12 L104 22 L112 22Z"/></svg>
 <div class="a" style="left:0;top:160px;width:300px;height:8px;background:#000"></div>
 <svg class="a" style="left:259px;top:29px" width="30" height="112" viewBox="0 0 60 160" preserveAspectRatio="none"><rect x="8" y="2" width="44" height="156" rx="22" fill="url(#sk)" stroke="#2a1a10" stroke-width="3"/><rect x="27" y="12" width="6" height="136" fill="#ecd9b0"/><rect x="0" y="19" width="12" height="16" rx="3" fill="#2a2a2a"/><rect x="48" y="19" width="12" height="16" rx="3" fill="#2a2a2a"/><rect x="0" y="125" width="12" height="16" rx="3" fill="#2a2a2a"/><rect x="48" y="125" width="12" height="16" rx="3" fill="#2a2a2a"/></svg>
</div>

<div class="s np" style="left:670px;top:1142px">
 <div class="a ck" style="left:245px;top:0;width:55px;height:18px"></div>
 <div class="tl"></div>
 <div class="a card" style="left:11px;top:12px;width:279px;height:135px"></div>
 <div class="ot">回忆黑板报</div>
 <div class="tx" style="left:20px;top:36px;font-size:4.5px;line-height:7.5px;color:#333">现场设置黑板涂鸦区，邀请到场客户在黑板上进行涂鸦，
或有专门艺术家将你的创意板书在黑板上进行创作，
在此处打卡拍照留念，可以分享到朋友圈，
通过创意板报画出自己的心愿，让来宾留下美好的回忆。</div>
 <div class="a" style="left:70px;top:50px;width:70px;height:93px;background:linear-gradient(160deg,#2a3a3a,#101818 70%,#3a4040)"></div>
 <div class="a" style="left:140px;top:50px;width:62px;height:93px;background:linear-gradient(200deg,#384848,#121a1a 60%,#2a3535)"></div>
 <div class="a" style="left:202px;top:45px;width:85px;height:98px;background:linear-gradient(180deg,#2a3838,#141c1c)"></div>
 <div class="a sans" style="left:222px;top:62px;font-size:14px;color:#ddd;font-style:italic;transform:rotate(-12deg);line-height:15px">Script<br>Me</div>
 <svg class="tr" viewBox="0 0 300 30" preserveAspectRatio="none"><path fill="#e6e6e6" d="M0 4 L8 2 L15 5 L24 1 L33 4 L42 2 L50 6 L60 3 L70 5 L80 1 L92 4 L104 2 L115 6 L126 3 L138 5 L150 2 L162 4 L175 1 L188 5 L200 3 L212 6 L225 2 L238 4 L250 1 L262 5 L275 2 L288 4 L300 2 V30 H0Z"/><path d="M0 9 L10 7 L20 10 L32 6 L44 9 L56 7 L68 11 L80 8 L94 10 L108 6 L120 9 L134 7 L148 10 L160 7 L174 9 L188 6 L200 10 L214 8 L228 10 L242 6 L256 9 L270 7 L284 10 L300 7 V30 H0Z"/></svg>
</div>

<!-- ================= ROW 4 ================= -->
<div class="s np" style="left:30px;top:1330px">
 <div class="a ck" style="left:245px;top:0;width:55px;height:18px"></div>
 <div class="tl"></div>
 <div class="a card" style="left:11px;top:12px;width:279px;height:135px"></div>
 <div class="ot">潮流校服派对</div>
 <div class="tx" style="left:20px;top:48px;font-size:4.5px;line-height:14px;color:#444">现场设置潮流校服拍摄区，邀请当下潮流青年
上身穿各种好看的校服拍照，满足一定门
槛后即可在这里进行拍摄，上行受欢迎的
拍分享的小赠品。
随后可以发布线上渠道，邀请网红达来
打卡现场传播。</div>
 <div class="a" style="left:123px;top:35px;width:80px;height:105px;background:linear-gradient(160deg,#4cc4c8,#2aa8b0 40%,#e8e8e8 60%,#48b8c0)"></div>
 <div class="a" style="left:205px;top:35px;width:76px;height:105px;background:linear-gradient(180deg,#2a2a2a,#4a3a3a 40%,#c8a088 60%,#3a3030)"></div>
 <div class="a" style="left:225px;top:95px;width:12px;height:14px;border-radius:50%;background:#e84a8a"></div>
 <div class="a" style="left:240px;top:100px;width:10px;height:12px;border-radius:50%;background:#f0d040"></div>
 <svg class="tr" viewBox="0 0 300 30" preserveAspectRatio="none"><path fill="#e6e6e6" d="M0 4 L8 2 L15 5 L24 1 L33 4 L42 2 L50 6 L60 3 L70 5 L80 1 L92 4 L104 2 L115 6 L126 3 L138 5 L150 2 L162 4 L175 1 L188 5 L200 3 L212 6 L225 2 L238 4 L250 1 L262 5 L275 2 L288 4 L300 2 V30 H0Z"/><path d="M0 9 L10 7 L20 10 L32 6 L44 9 L56 7 L68 11 L80 8 L94 10 L108 6 L120 9 L134 7 L148 10 L160 7 L174 9 L188 6 L200 10 L214 8 L228 10 L242 6 L256 9 L270 7 L284 10 L300 7 V30 H0Z"/></svg>
</div>

<div class="s np" style="left:350px;top:1330px">
 <div class="a ck" style="left:245px;top:0;width:55px;height:18px"></div>
 <div class="tl"></div>
 <div class="a card" style="left:11px;top:12px;width:279px;height:135px"></div>
 <div class="ot">开学大礼包</div>
 <div class="tx" style="left:20px;top:48px;font-size:4.5px;line-height:14px;color:#444">书包/环笔、书籍文件、书皮书签等用品，
上门学生赠备，孩子们可以自己选择准备
自己的开学装备，新学期赶上自己喜欢的
各种文具，学习动力满满开学呢。
在此活动过程中，孩子们也可以为家人准
备一份专门的开学礼物！</div>
 <div class="a" style="left:150px;top:48px;width:46px;height:67px;border-radius:14px 14px 8px 8px;background:linear-gradient(180deg,#3a6ad8,#1a3a9a);border:2px solid #6aa0f0"></div>
 <div class="a" style="left:162px;top:70px;width:22px;height:22px;border-radius:50%;background:#222"></div>
 <div class="a" style="left:210px;top:16px;width:65px;height:59px;background:linear-gradient(160deg,#8ad8e8,#4ab8d0 60%,#3aa0b8)"></div>
 <div class="a" style="left:222px;top:28px;width:18px;height:40px;background:#2ab068;clip-path:polygon(50% 0,100% 100%,0 100%)"></div>
 <div class="a" style="left:210px;top:77px;width:65px;height:60px;background:linear-gradient(160deg,#e8d8c0,#8a7050 50%,#d8c8b0)"></div>
 <svg class="tr" viewBox="0 0 300 30" preserveAspectRatio="none"><path fill="#e6e6e6" d="M0 4 L8 2 L15 5 L24 1 L33 4 L42 2 L50 6 L60 3 L70 5 L80 1 L92 4 L104 2 L115 6 L126 3 L138 5 L150 2 L162 4 L175 1 L188 5 L200 3 L212 6 L225 2 L238 4 L250 1 L262 5 L275 2 L288 4 L300 2 V30 H0Z"/><path d="M0 9 L10 7 L20 10 L32 6 L44 9 L56 7 L68 11 L80 8 L94 10 L108 6 L120 9 L134 7 L148 10 L160 7 L174 9 L188 6 L200 10 L214 8 L228 10 L242 6 L256 9 L270 7 L284 10 L300 7 V30 H0Z"/></svg>
</div>

<div class="s np" style="left:670px;top:1330px">
 <div class="a ck" style="left:245px;top:0;width:55px;height:18px"></div>
 <div class="a ck" style="left:288px;top:0;width:12px;height:110px"></div>
 <div class="tl"></div>
 <div class="a card" style="left:11px;top:11px;width:279px;height:150px"></div>
 <div class="yb" style="left:20px;top:16px;width:258px;height:14px;text-align:center;font-size:9px;line-height:12px">第二周 <span style="font-size:5px">(9月9日—9月12日)</span></div>
 <div class="a sep" style="left:15px;top:36px;width:110px;height:28px;background:#ec7a2a;border:1px solid #6b3b12;line-height:26px;padding-left:4px">September</div>
 <div class="a" style="left:60px;top:78px;width:175px;text-align:center;font-size:19px">喜迎中秋节</div>
 <svg class="mt" style="top:100px;height:62px" viewBox="0 0 300 62" preserveAspectRatio="none"><path fill="url(#mg)" d="M0 26 L15 18 L28 22 L45 4 L58 16 L70 10 L84 20 L98 12 L112 22 L126 16 L140 26 L155 18 L170 6 L184 16 L198 12 L214 22 L230 14 L246 24 L262 16 L280 22 L300 18 V62 H0Z"/><path fill="#e6e2da" opacity=".6" d="M45 4 L52 16 L48 22 L58 16Z M170 6 L178 18 L172 24 L184 16Z M98 12 L104 22 L112 22Z"/></svg>
 <div class="a" style="left:0;top:160px;width:300px;height:8px;background:#000"></div>
 <svg class="a" style="left:259px;top:29px" width="30" height="112" viewBox="0 0 60 160" preserveAspectRatio="none"><rect x="8" y="2" width="44" height="156" rx="22" fill="url(#sk)" stroke="#2a1a10" stroke-width="3"/><rect x="27" y="12" width="6" height="136" fill="#ecd9b0"/><rect x="0" y="19" width="12" height="16" rx="3" fill="#2a2a2a"/><rect x="48" y="19" width="12" height="16" rx="3" fill="#2a2a2a"/><rect x="0" y="125" width="12" height="16" rx="3" fill="#2a2a2a"/><rect x="48" y="125" width="12" height="16" rx="3" fill="#2a2a2a"/></svg>
</div>

<!-- ================= ROW 5 ================= -->
<div class="s np" style="left:30px;top:1518px">
 <div class="a ck" style="left:245px;top:0;width:55px;height:18px"></div>
 <div class="tl"></div>
 <div class="a card" style="left:11px;top:12px;width:279px;height:135px"></div>
 <div class="ot">月兔救萝卜</div>
 <div class="tx" style="left:26px;top:46px;font-size:4.5px;line-height:12.8px;color:#444">场景布置中秋玉兔的说明，
布置不同性质的萝卜，来往
便可在此把萝卜拔上来，可
以分组进行挑战，设置不错
的现场互动小游戏，能够有
效增加现场的趣味性，延长
驻留时间。</div>
 <div class="bx" style="left:110px;top:35px;width:163px;height:104px"></div>
 <div class="a" style="left:114px;top:37px;font-size:3px;color:#888">▫ 兔子救萝卜图片</div>
 <svg class="tr" viewBox="0 0 300 30" preserveAspectRatio="none"><path fill="#e6e6e6" d="M0 4 L8 2 L15 5 L24 1 L33 4 L42 2 L50 6 L60 3 L70 5 L80 1 L92 4 L104 2 L115 6 L126 3 L138 5 L150 2 L162 4 L175 1 L188 5 L200 3 L212 6 L225 2 L238 4 L250 1 L262 5 L275 2 L288 4 L300 2 V30 H0Z"/><path d="M0 9 L10 7 L20 10 L32 6 L44 9 L56 7 L68 11 L80 8 L94 10 L108 6 L120 9 L134 7 L148 10 L160 7 L174 9 L188 6 L200 10 L214 8 L228 10 L242 6 L256 9 L270 7 L284 10 L300 7 V30 H0Z"/></svg>
</div>

<div class="s np" style="left:350px;top:1518px">
 <div class="a ck" style="left:245px;top:0;width:55px;height:18px"></div>
 <div class="tl"></div>
 <div class="a card" style="left:11px;top:12px;width:279px;height:135px"></div>
 <div class="ot">蟹蟹月饼手作</div>
 <div class="tx" style="left:25px;top:46px;font-size:4.5px;line-height:12.8px;color:#444">中秋节必不可少的食物是月
饼，近年来大闸蟹也成为必
备礼品之一，使用蟹肉馅料
做的蟹黄月饼，做出一个不同风
格的大闸蟹，呈现给您的好
创意活动。</div>
 <div class="a" style="left:100px;top:67px;width:97px;height:65px;background:linear-gradient(160deg,#5a4a3a,#2a2018 50%,#c89858 80%,#4a3828)"></div>
 <div class="a" style="left:200px;top:40px;width:85px;height:55px;background:linear-gradient(150deg,#e89a3a,#f0b84a 40%,#3a58a8 75%,#e8a040)"></div>
 <svg class="tr" viewBox="0 0 300 30" preserveAspectRatio="none"><path fill="#e6e6e6" d="M0 4 L8 2 L15 5 L24 1 L33 4 L42 2 L50 6 L60 3 L70 5 L80 1 L92 4 L104 2 L115 6 L126 3 L138 5 L150 2 L162 4 L175 1 L188 5 L200 3 L212 6 L225 2 L238 4 L250 1 L262 5 L275 2 L288 4 L300 2 V30 H0Z"/><path d="M0 9 L10 7 L20 10 L32 6 L44 9 L56 7 L68 11 L80 8 L94 10 L108 6 L120 9 L134 7 L148 10 L160 7 L174 9 L188 6 L200 10 L214 8 L228 10 L242 6 L256 9 L270 7 L284 10 L300 7 V30 H0Z"/></svg>
</div>

<div class="s np" style="left:670px;top:1518px">
 <div class="a ck" style="left:245px;top:0;width:55px;height:18px"></div>
 <div class="tl"></div>
 <div class="a card" style="left:11px;top:12px;width:279px;height:135px"></div>
 <div class="ot">月饼手工皂</div>
 <div class="tx" style="left:26px;top:46px;font-size:4.5px;line-height:12.8px;color:#444">用心送好礼，无材料自来，
中秋佳节除了送香甜可口的
月饼以外，也可以制作月饼
制作生活用品一手工皂，做
好以后使用精美礼盒包装，
送给亲朋好友，也能表达出
送礼者的一份浓浓的情谊。</div>
 <div class="a" style="left:111px;top:40px;width:81px;height:97px;background:linear-gradient(90deg,#c8a070,#b88858 60%,#e8e0d8)"></div>
 <div class="a" style="left:125px;top:60px;width:18px;height:50px;background:#d82828"></div>
 <div class="a" style="left:195px;top:40px;width:87px;height:97px;background:linear-gradient(170deg,#ddd,#a8a0a8 40%,#8a7a9a 60%,#c8b8a8)"></div>
 <svg class="tr" viewBox="0 0 300 30" preserveAspectRatio="none"><path fill="#e6e6e6" d="M0 4 L8 2 L15 5 L24 1 L33 4 L42 2 L50 6 L60 3 L70 5 L80 1 L92 4 L104 2 L115 6 L126 3 L138 5 L150 2 L162 4 L175 1 L188 5 L200 3 L212 6 L225 2 L238 4 L250 1 L262 5 L275 2 L288 4 L300 2 V30 H0Z"/><path d="M0 9 L10 7 L20 10 L32 6 L44 9 L56 7 L68 11 L80 8 L94 10 L108 6 L120 9 L134 7 L148 10 L160 7 L174 9 L188 6 L200 10 L214 8 L228 10 L242 6 L256 9 L270 7 L284 10 L300 7 V30 H0Z"/></svg>
</div>

<!-- ================= ROW 6 ================= -->
<div class="s np" style="left:30px;top:1706px">
 <div class="a ck" style="left:245px;top:0;width:55px;height:18px"></div>
 <div class="a ck" style="left:288px;top:0;width:12px;height:110px"></div>
 <div class="tl"></div>
 <div class="a card" style="left:11px;top:11px;width:279px;height:150px"></div>
 <div class="yb" style="left:20px;top:16px;width:258px;height:14px;text-align:center;font-size:9px;line-height:12px">第三周 <span style="font-size:5px">(9月16日—9月18日)</span></div>
 <div class="a sep" style="left:15px;top:36px;width:110px;height:28px;background:#ec7a2a;border:1px solid #6b3b12;line-height:26px;padding-left:4px">September</div>
 <div class="a" style="left:60px;top:78px;width:175px;text-align:center;font-size:19px">秋日嘉年华</div>
 <svg class="mt" style="top:100px;height:62px" viewBox="0 0 300 62" preserveAspectRatio="none"><path fill="url(#mg)" d="M0 26 L15 18 L28 22 L45 4 L58 16 L70 10 L84 20 L98 12 L112 22 L126 16 L140 26 L155 18 L170 6 L184 16 L198 12 L214 22 L230 14 L246 24 L262 16 L280 22 L300 18 V62 H0Z"/><path fill="#e6e2da" opacity=".6" d="M45 4 L52 16 L48 22 L58 16Z M170 6 L178 18 L172 24 L184 16Z M98 12 L104 22 L112 22Z"/></svg>
 <div class="a" style="left:0;top:160px;width:300px;height:8px;background:#000"></div>
 <svg class="a" style="left:260px;top:29px" width="30" height="112" viewBox="0 0 60 160" preserveAspectRatio="none"><rect x="8" y="2" width="44" height="156" rx="22" fill="url(#sk)" stroke="#2a1a10" stroke-width="3"/><rect x="27" y="12" width="6" height="136" fill="#ecd9b0"/><rect x="0" y="19" width="12" height="16" rx="3" fill="#2a2a2a"/><rect x="48" y="19" width="12" height="16" rx="3" fill="#2a2a2a"/><rect x="0" y="125" width="12" height="16" rx="3" fill="#2a2a2a"/><rect x="48" y="125" width="12" height="16" rx="3" fill="#2a2a2a"/></svg>
</div>

<div class="s np" style="left:350px;top:1706px">
 <div class="a ck" style="left:245px;top:0;width:55px;height:18px"></div>
 <div class="tl"></div>
 <div class="a card" style="left:11px;top:12px;width:279px;height:135px"></div>
 <div class="ot">好柿正在发生</div>
 <div class="tx" style="left:22px;top:48px;font-size:4.5px;line-height:15.3px;color:#444">秋季日成的水果之一柿子，
因为与事同音，所以有很多
好事可以发生，于柿相国，
用柿子做各花艺制作花艺手
工等。</div>
 <div class="bx" style="left:117px;top:41px;width:87px;height:96px"></div>
 <div class="bx" style="left:206px;top:42px;width:66px;height:95px"></div>
 <svg class="tr" viewBox="0 0 300 30" preserveAspectRatio="none"><path fill="#e6e6e6" d="M0 4 L8 2 L15 5 L24 1 L33 4 L42 2 L50 6 L60 3 L70 5 L80 1 L92 4 L104 2 L115 6 L126 3 L138 5 L150 2 L162 4 L175 1 L188 5 L200 3 L212 6 L225 2 L238 4 L250 1 L262 5 L275 2 L288 4 L300 2 V30 H0Z"/><path d="M0 9 L10 7 L20 10 L32 6 L44 9 L56 7 L68 11 L80 8 L94 10 L108 6 L120 9 L134 7 L148 10 L160 7 L174 9 L188 6 L200 10 L214 8 L228 10 L242 6 L256 9 L270 7 L284 10 L300 7 V30 H0Z"/></svg>
</div>

<div class="s np" style="left:670px;top:1706px">
 <div class="a ck" style="left:245px;top:0;width:55px;height:18px"></div>
 <div class="tl"></div>
 <div class="a card" style="left:11px;top:12px;width:279px;height:135px"></div>
 <div class="ot">秋日香氛手作</div>
 <div class="tx" style="left:22px;top:44px;font-size:4.5px;line-height:9px;color:#444">秋，有很多面孔，就如是一种，同样也是一种，手作香氛精彩可以带有自己的心情，散发着高
级出与不同美感。</div>
 <div class="bx" style="left:24px;top:67px;width:111px;height:68px"></div>
 <div class="a" style="left:139px;top:67px;width:122px;height:68px;background:linear-gradient(135deg,#2a3a6a,#e8e8f0 45%,#c8d0e0 65%,#2a6ae0)"></div>
 <svg class="tr" viewBox="0 0 300 30" preserveAspectRatio="none"><path fill="#e6e6e6" d="M0 4 L8 2 L15 5 L24 1 L33 4 L42 2 L50 6 L60 3 L70 5 L80 1 L92 4 L104 2 L115 6 L126 3 L138 5 L150 2 L162 4 L175 1 L188 5 L200 3 L212 6 L225 2 L238 4 L250 1 L262 5 L275 2 L288 4 L300 2 V30 H0Z"/><path d="M0 9 L10 7 L20 10 L32 6 L44 9 L56 7 L68 11 L80 8 L94 10 L108 6 L120 9 L134 7 L148 10 L160 7 L174 9 L188 6 L200 10 L214 8 L228 10 L242 6 L256 9 L270 7 L284 10 L300 7 V30 H0Z"/></svg>
</div>

<!-- ================= ROW 7 ================= -->
<div class="s np" style="left:30px;top:1894px">
 <div class="a ck" style="left:245px;top:0;width:55px;height:18px"></div>
 <div class="tl"></div>
 <div class="a card" style="left:11px;top:12px;width:279px;height:135px"></div>
 <div class="ot">收集秋天</div>
 <div class="tx" style="left:22px;top:48px;font-size:4.5px;line-height:15.3px;color:#444">秋天时节，每一片叶子都代
表一份风景，美好的类似于
和孩子一起"找个秋叶拼"，
就去大自然中寻找叶宝，或
者收集种中创作艺术！</div>
 <div class="a" style="left:106px;top:41px;width:146px;height:92px;background:linear-gradient(120deg,#c06a3a,#e8d8c8 35%,#8a8a7a 55%,#f0e8d8 70%,#d8a860)"></div>
 <svg class="tr" viewBox="0 0 300 30" preserveAspectRatio="none"><path fill="#e6e6e6" d="M0 4 L8 2 L15 5 L24 1 L33 4 L42 2 L50 6 L60 3 L70 5 L80 1 L92 4 L104 2 L115 6 L126 3 L138 5 L150 2 L162 4 L175 1 L188 5 L200 3 L212 6 L225 2 L238 4 L250 1 L262 5 L275 2 L288 4 L300 2 V30 H0Z"/><path d="M0 9 L10 7 L20 10 L32 6 L44 9 L56 7 L68 11 L80 8 L94 10 L108 6 L120 9 L134 7 L148 10 L160 7 L174 9 L188 6 L200 10 L214 8 L228 10 L242 6 L256 9 L270 7 L284 10 L300 7 V30 H0Z"/></svg>
</div>

<div class="s np" style="left:350px;top:1894px">
 <div class="a ck" style="left:245px;top:0;width:55px;height:18px"></div>
 <div class="a ck" style="left:288px;top:0;width:12px;height:110px"></div>
 <div class="tl"></div>
 <div class="a card" style="left:11px;top:11px;width:279px;height:150px"></div>
 <div class="yb" style="left:20px;top:16px;width:258px;height:14px;text-align:center;font-size:9px;line-height:12px">第四周 <span style="font-size:5px">(9月23日—9月25日)</span></div>
 <div class="a sep" style="left:15px;top:36px;width:110px;height:28px;background:#ec7a2a;border:1px solid #6b3b12;line-height:26px;padding-left:4px">September</div>
 <div class="a" style="left:60px;top:78px;width:175px;text-align:center;font-size:19px">秋日丰收季</div>
 <svg class="mt" style="top:100px;height:62px" viewBox="0 0 300 62" preserveAspectRatio="none"><path fill="url(#mg)" d="M0 26 L15 18 L28 22 L45 4 L58 16 L70 10 L84 20 L98 12 L112 22 L126 16 L140 26 L155 18 L170 6 L184 16 L198 12 L214 22 L230 14 L246 24 L262 16 L280 22 L300 18 V62 H0Z"/><path fill="#e6e2da" opacity=".6" d="M45 4 L52 16 L48 22 L58 16Z M170 6 L178 18 L172 24 L184 16Z M98 12 L104 22 L112 22Z"/></svg>
 <div class="a" style="left:0;top:160px;width:300px;height:8px;background:#000"></div>
 <svg class="a" style="left:259px;top:29px" width="30" height="112" viewBox="0 0 60 160" preserveAspectRatio="none"><rect x="8" y="2" width="44" height="156" rx="22" fill="url(#sk)" stroke="#2a1a10" stroke-width="3"/><rect x="27" y="12" width="6" height="136" fill="#ecd9b0"/><rect x="0" y="19" width="12" height="16" rx="3" fill="#2a2a2a"/><rect x="48" y="19" width="12" height="16" rx="3" fill="#2a2a2a"/><rect x="0" y="125" width="12" height="16" rx="3" fill="#2a2a2a"/><rect x="48" y="125" width="12" height="16" rx="3" fill="#2a2a2a"/></svg>
</div>

<div class="s np" style="left:670px;top:1894px">
 <div class="a ck" style="left:245px;top:0;width:55px;height:18px"></div>
 <div class="tl"></div>
 <div class="a card" style="left:11px;top:12px;width:279px;height:135px"></div>
 <div class="ot">秋日桂花节</div>
 <div class="tx" style="left:26px;top:46px;font-size:4.5px;line-height:12.6px;color:#444">小区可以邀请优质的展示，你可
以围绕桂花主题做一系列的有
关活动，自制桂花酱，自制桂
花饼，全民参加桂节为秋日里
平添了更多美好的时候。</div>
 <div class="bx" style="left:113px;top:42px;width:89px;height:91px"></div>
 <div class="bx" style="left:208px;top:18px;width:77px;height:116px"></div>
 <svg class="tr" viewBox="0 0 300 30" preserveAspectRatio="none"><path fill="#e6e6e6" d="M0 4 L8 2 L15 5 L24 1 L33 4 L42 2 L50 6 L60 3 L70 5 L80 1 L92 4 L104 2 L115 6 L126 3 L138 5 L150 2 L162 4 L175 1 L188 5 L200 3 L212 6 L225 2 L238 4 L250 1 L262 5 L275 2 L288 4 L300 2 V30 H0Z"/><path d="M0 9 L10 7 L20 10 L32 6 L44 9 L56 7 L68 11 L80 8 L94 10 L108 6 L120 9 L134 7 L148 10 L160 7 L174 9 L188 6 L200 10 L214 8 L228 10 L242 6 L256 9 L270 7 L284 10 L300 7 V30 H0Z"/></svg>
</div>

<!-- ================= ROW 8 ================= -->
<div class="s np" style="left:30px;top:2082px">
 <div class="a ck" style="left:245px;top:0;width:55px;height:18px"></div>
 <div class="tl"></div>
 <div class="a card" style="left:11px;top:12px;width:279px;height:135px"></div>
 <div class="ot">秋日农夫市集</div>
 <div class="tx" style="left:22px;top:48px;font-size:4.5px;line-height:12.4px;color:#444">秋日是丰收的季节，各种瓜果丰
硕喜人，整个场品农产品，打造
有格调的专业农夫市集，在大市
集这片中间商，直接用农人采购
的农贸市场，同时本次活动也能
起到宣传的公益效果。</div>
 <div class="bx" style="left:102px;top:46px;width:115px;height:86px"></div>
 <div class="bx" style="left:220px;top:31px;width:66px;height:51px"></div>
 <div class="bx" style="left:220px;top:85px;width:66px;height:50px"></div>
 <svg class="tr" viewBox="0 0 300 30" preserveAspectRatio="none"><path fill="#e6e6e6" d="M0 4 L8 2 L15 5 L24 1 L33 4 L42 2 L50 6 L60 3 L70 5 L80 1 L92 4 L104 2 L115 6 L126 3 L138 5 L150 2 L162 4 L175 1 L188 5 L200 3 L212 6 L225 2 L238 4 L250 1 L262 5 L275 2 L288 4 L300 2 V30 H0Z"/><path d="M0 9 L10 7 L20 10 L32 6 L44 9 L56 7 L68 11 L80 8 L94 10 L108 6 L120 9 L134 7 L148 10 L160 7 L174 9 L188 6 L200 10 L214 8 L228 10 L242 6 L256 9 L270 7 L284 10 L300 7 V30 H0Z"/></svg>
</div>

<div class="s np" style="left:350px;top:2082px">
 <div class="a ck" style="left:245px;top:0;width:55px;height:18px"></div>
 <div class="tl"></div>
 <div class="a card" style="left:11px;top:12px;width:279px;height:135px"></div>
 <div class="ot">秋日音乐会</div>
 <div class="tx" style="left:26px;top:52px;font-size:4.5px;line-height:12.9px;color:#444">打造秋季轻柔的温润氛围，在
此乐音之中进行专属秋季音乐
会演出，有情调的民谣，有节
奏的乐曲，是玩得欢，更是
庆祝秋天的美好心情。</div>
 <div class="bx" style="left:119px;top:37px;width:152px;height:102px"></div>
 <svg class="tr" viewBox="0 0 300 30" preserveAspectRatio="none"><path fill="#e6e6e6" d="M0 4 L8 2 L15 5 L24 1 L33 4 L42 2 L50 6 L60 3 L70 5 L80 1 L92 4 L104 2 L115 6 L126 3 L138 5 L150 2 L162 4 L175 1 L188 5 L200 3 L212 6 L225 2 L238 4 L250 1 L262 5 L275 2 L288 4 L300 2 V30 H0Z"/><path d="M0 9 L10 7 L20 10 L32 6 L44 9 L56 7 L68 11 L80 8 L94 10 L108 6 L120 9 L134 7 L148 10 L160 7 L174 9 L188 6 L200 10 L214 8 L228 10 L242 6 L256 9 L270 7 L284 10 L300 7 V30 H0Z"/></svg>
</div>

<div class="th" style="left:670px;top:2082px"><div class="cv">
 <div class="a np" style="left:0;top:0;width:940px;height:528px"></div>
 <div class="a ckb" style="left:0;top:0;width:385px;height:80px"></div>
 <div class="a ckb" style="left:0;top:0;width:45px;height:420px"></div>
 <div class="a" style="left:15px;top:38px;width:265px;height:400px;background:#cdb68a;border:9px solid #e8c98a"></div>
 <div class="a" style="left:384px;top:0;width:252px;height:28px;background:#f7a823"></div>
 <div class="a" style="left:384px;top:28px;width:252px;height:9px;background:#111"></div>
 <div class="a" style="left:384px;top:37px;width:252px;height:40px;background:linear-gradient(90deg,#6a645c,#d4ccc0 45%,#8a847c)"></div>
 <div class="a" style="left:640px;top:40px;font-size:22px;color:#3a2a1a;font-weight:bold;white-space:nowrap">KSHUTT PLOW COMPANY</div>
 <div class="a" style="left:98px;top:75px;width:802px;height:7px;background:#111"></div>
 <div class="a" style="left:98px;top:82px;width:787px;height:260px;background:#fff;border:3px solid #111"></div>
 <div class="a" style="left:101px;top:85px;width:443px;height:157px;background:#fde33b;clip-path:polygon(0 0,100% 0,0 100%)"></div>
 <div class="a sans" style="left:184px;top:100px;font-size:42px;font-weight:bold;color:#f2df3e;-webkit-text-stroke:1.2px #6a6a40">September.</div>
 <div class="a sans mo">九月份<br>月度活动方案</div>
 <div class="a" style="left:172px;top:160px;width:570px;text-align:center;font-size:70px;line-height:86px;font-family:'Noto Sans CJK SC',sans-serif;text-shadow:3px 5px 0 #fff,5px 8px 0 #444">应急预案</div>
 <div class="a sans hd">Head for the good times</div>
 <div class="a yr" style="left:165px">2023年9月份活动策划方案</div>
 <div class="a sans ev" style="left:505px">EVENTS</div>
 <div class="a" style="left:169px;top:326px;width:711px;height:14px;background:#e8731f;border-top:3px solid #111;border-bottom:2px solid #111"></div>
 <div class="a" style="left:169px;top:340px;width:405px;height:78px;background:#fde33b;border:2px solid #111"></div>
 <div class="a" style="left:574px;top:340px;width:306px;height:78px;background:#ef812d;border:2px solid #111;border-left:0"></div>
 <svg class="a" style="left:0;top:410px" width="940" height="118" viewBox="0 0 300 38" preserveAspectRatio="none"><path fill="#e6e6e6" d="M0 7 L8 4 L15 6 L24 2 L33 5 L42 3 L50 7 L60 4 L70 6 L80 2 L92 5 L104 3 L115 7 L126 4 L138 6 L150 3 L162 5 L175 2 L188 6 L200 4 L212 7 L225 3 L238 5 L250 2 L262 6 L275 3 L288 5 L300 3 V38 H0Z"/><path d="M0 14 L10 12 L20 15 L32 11 L44 14 L56 12 L68 16 L80 13 L94 15 L108 11 L120 14 L134 12 L148 15 L160 12 L174 14 L188 11 L200 15 L214 13 L228 15 L242 11 L256 14 L270 12 L284 15 L300 12 V38 H0Z"/></svg>
 <svg class="a" style="left:40px;top:81px" width="100" height="265" viewBox="0 0 60 160"><rect x="8" y="2" width="44" height="156" rx="22" fill="url(#sk)" stroke="#2a1a10" stroke-width="3"/><rect x="27" y="12" width="6" height="136" fill="#ecd9b0"/><rect x="0" y="19" width="12" height="16" rx="3" fill="#2a2a2a"/><rect x="48" y="19" width="12" height="16" rx="3" fill="#2a2a2a"/></svg>
 <svg class="a" style="left:12px;top:335px" width="340" height="175" viewBox="0 0 340 175"><path d="M20 80 L60 60 L95 25 L140 18 L175 40 L260 70 L300 95 L305 130 L60 150 L15 130Z" fill="#fff"/><path d="M25 85 L80 70 L110 35 L145 28 L170 48 L255 78 L295 100 L298 125 L70 142 L22 125Z" fill="url(#cr)"/><path d="M95 40 L110 30 L140 26 L150 48 L100 58Z" fill="#5a6a78"/><path d="M150 130 L320 110 L330 140 L170 160Z" fill="#bbb"/><circle cx="95" cy="140" r="30" fill="#1a1a1a"/><circle cx="95" cy="140" r="15" fill="#aaa"/><circle cx="250" cy="138" r="26" fill="#1a1a1a"/><circle cx="250" cy="138" r="12" fill="#aaa"/></svg>
 <div class="a" style="left:715px;top:325px;width:215px;height:165px;transform:rotate(8deg);background:#6b3318;border:4px solid #fff"><div class="a" style="left:10px;top:10px;width:150px;height:138px;background:linear-gradient(135deg,#d0cdc8,#6a6660 50%,#bdb8b0);border:6px solid #9a9a9a;border-radius:10px"></div></div>
</div></div>

<!-- ================= ROW 9 ================= -->
<div class="s np" style="left:30px;top:2270px">
 <div class="a ck" style="left:245px;top:0;width:55px;height:18px"></div>
 <div class="tl"></div>
 <div class="a card" style="left:11px;top:12px;width:279px;height:140px"></div>
 <div class="a" style="left:16px;top:18px;font-size:8px;font-weight:bold">1、人员拥挤</div>
 <div class="tx" style="left:16px;top:27px;font-size:3.8px;line-height:6px;color:#333">a.发生拥挤时应立即采取应急措施，人员有序疏散，不得拥挤
由专门的现场广播系统进行通告，同时疏散人员，做好分流，疏散，指挥。
b.人员拥挤处的秩序，维持好大量安保人员，对拥挤地带进行警戒以及疏导。</div>
 <div class="a" style="left:16px;top:54px;font-size:8px;font-weight:bold">2、活动现场人员财物丢失：</div>
 <div class="tx" style="left:16px;top:65px;font-size:3.8px;line-height:8.2px;color:#333">a.来宾物品遗失或被盗窃时，立即告知负责人或现场工作人员。
b.经过主持人广播寻找，提醒来宾注意保管好个人物品。
c.协助客人报失或报案处理，尽快找回，登记地点，物品价值。
d.来宾物品丢失或人员走失时，请客服中心协助处理寻找。</div>
 <div class="a" style="left:16px;top:100px;font-size:8px;font-weight:bold">3、业主发生争吵：</div>
 <div class="tx" style="left:16px;top:112px;font-size:3.8px;line-height:8px;color:#333">a.在活动现场发生一般争吵，有关工作人员要及时劝阻，事件严重报警处理。
b.对情绪激动的来宾要进行安抚，尽力化解矛盾，避免事态扩大。
c.发生过了肢体冲突，立即报保安处理，必要时报警，事后严重的上报处理。</div>
 <svg class="tr" style="top:140px" viewBox="0 0 300 30" preserveAspectRatio="none"><path fill="#e6e6e6" d="M0 4 L8 2 L15 5 L24 1 L33 4 L42 2 L50 6 L60 3 L70 5 L80 1 L92 4 L104 2 L115 6 L126 3 L138 5 L150 2 L162 4 L175 1 L188 5 L200 3 L212 6 L225 2 L238 4 L250 1 L262 5 L275 2 L288 4 L300 2 V30 H0Z"/><path d="M0 9 L10 7 L20 10 L32 6 L44 9 L56 7 L68 11 L80 8 L94 10 L108 6 L120 9 L134 7 L148 10 L160 7 L174 9 L188 6 L200 10 L214 8 L228 10 L242 6 L256 9 L270 7 L284 10 L300 7 V30 H0Z"/></svg>
 <div class="a" style="left:0;top:153px;width:300px;text-align:center;font-size:10px;color:#ddd;letter-spacing:8px">应急预案</div>
</div>

<div class="s np" style="left:350px;top:2270px">
 <div class="a ck" style="left:245px;top:0;width:55px;height:18px"></div>
 <div class="tl"></div>
 <div class="a card" style="left:11px;top:12px;width:279px;height:140px"></div>
 <div class="a" style="left:16px;top:18px;font-size:8.5px">1、发现伤病员的时候</div>
 <div class="tx" style="left:16px;top:31px;font-size:3.8px;line-height:10px;color:#333">确认附近有没有伤病员的亲人/同伴/熟人。
确认伤病员的病情，将对病员的伤病人，可先搬运。
根据情况由工作人员陪同前往医疗室，或现场附近医疗机构。
a.中暑情况
将中暑者移至阴凉通风处，解开衣扣，如中暑情况较严重的，立即拨打急救电话。
b.轻伤情况
向本人确认身体状况后，判断是否轻伤，在现场医疗室治疗。
c.重伤情况
如本人无法行走，判断是否需要严重的伤情，不要移动伤病员，拨打急救电话，由现场负责人判断下一步
行动处理，打急救电话，要求准备救护车。
如有需要应急通知医院相关的救助医院，联系救援车辆。</div>
 <svg class="tr" style="top:140px" viewBox="0 0 300 30" preserveAspectRatio="none"><path fill="#e6e6e6" d="M0 4 L8 2 L15 5 L24 1 L33 4 L42 2 L50 6 L60 3 L70 5 L80 1 L92 4 L104 2 L115 6 L126 3 L138 5 L150 2 L162 4 L175 1 L188 5 L200 3 L212 6 L225 2 L238 4 L250 1 L262 5 L275 2 L288 4 L300 2 V30 H0Z"/><path d="M0 9 L10 7 L20 10 L32 6 L44 9 L56 7 L68 11 L80 8 L94 10 L108 6 L120 9 L134 7 L148 10 L160 7 L174 9 L188 6 L200 10 L214 8 L228 10 L242 6 L256 9 L270 7 L284 10 L300 7 V30 H0Z"/></svg>
 <div class="a" style="left:0;top:153px;width:300px;text-align:center;font-size:10px;color:#ddd;letter-spacing:8px">应急预案</div>
</div>

<div class="th" style="left:670px;top:2270px"><div class="cv">
 <div class="a np" style="left:0;top:0;width:940px;height:528px"></div>
 <div class="a ckb" style="left:0;top:0;width:385px;height:80px"></div>
 <div class="a ckb" style="left:0;top:0;width:45px;height:420px"></div>
 <div class="a" style="left:15px;top:38px;width:265px;height:400px;background:#cdb68a;border:9px solid #e8c98a"></div>
 <div class="a" style="left:384px;top:0;width:252px;height:28px;background:#f7a823"></div>
 <div class="a" style="left:384px;top:28px;width:252px;height:9px;background:#111"></div>
 <div class="a" style="left:384px;top:37px;width:252px;height:40px;background:linear-gradient(90deg,#6a645c,#d4ccc0 45%,#8a847c)"></div>
 <div class="a" style="left:640px;top:40px;font-size:22px;color:#3a2a1a;font-weight:bold;white-space:nowrap">KSHUTT PLOW COMPANY</div>
 <div class="a" style="left:98px;top:75px;width:802px;height:7px;background:#111"></div>
 <div class="a" style="left:98px;top:82px;width:787px;height:260px;background:#fff;border:3px solid #111"></div>
 <div class="a" style="left:101px;top:85px;width:443px;height:157px;background:#fde33b;clip-path:polygon(0 0,100% 0,0 100%)"></div>
 <div class="a sans" style="left:184px;top:100px;font-size:42px;font-weight:bold;color:#f2df3e;-webkit-text-stroke:1.2px #6a6a40">September.</div>
 <div class="a sans mo">九月份<br>月度活动方案</div>
 <div class="a" style="left:172px;top:160px;width:640px;text-align:center;font-size:72px;line-height:86px;font-family:'Noto Sans CJK SC',sans-serif;text-shadow:3px 5px 0 #fff,5px 8px 0 #444">感谢观看后会有期</div>
 <div class="a sans hd">Head for the good times</div>
 <div class="a yr" style="left:165px">2023年9月份活动策划方案</div>
 <div class="a sans ev" style="left:505px">EVENTS</div>
 <div class="a" style="left:169px;top:326px;width:711px;height:14px;background:#e8731f;border-top:3px solid #111;border-bottom:2px solid #111"></div>
 <div class="a" style="left:169px;top:340px;width:405px;height:78px;background:#fde33b;border:2px solid #111"></div>
 <div class="a" style="left:574px;top:340px;width:306px;height:78px;background:#ef812d;border:2px solid #111;border-left:0"></div>
 <svg class="a" style="left:0;top:410px" width="940" height="118" viewBox="0 0 300 38" preserveAspectRatio="none"><path fill="#e6e6e6" d="M0 7 L8 4 L15 6 L24 2 L33 5 L42 3 L50 7 L60 4 L70 6 L80 2 L92 5 L104 3 L115 7 L126 4 L138 6 L150 3 L162 5 L175 2 L188 6 L200 4 L212 7 L225 3 L238 5 L250 2 L262 6 L275 3 L288 5 L300 3 V38 H0Z"/><path d="M0 14 L10 12 L20 15 L32 11 L44 14 L56 12 L68 16 L80 13 L94 15 L108 11 L120 14 L134 12 L148 15 L160 12 L174 14 L188 11 L200 15 L214 13 L228 15 L242 11 L256 14 L270 12 L284 15 L300 12 V38 H0Z"/></svg>
 <svg class="a" style="left:40px;top:81px" width="100" height="265" viewBox="0 0 60 160"><rect x="8" y="2" width="44" height="156" rx="22" fill="url(#sk)" stroke="#2a1a10" stroke-width="3"/><rect x="27" y="12" width="6" height="136" fill="#ecd9b0"/><rect x="0" y="19" width="12" height="16" rx="3" fill="#2a2a2a"/><rect x="48" y="19" width="12" height="16" rx="3" fill="#2a2a2a"/></svg>
 <svg class="a" style="left:12px;top:335px" width="340" height="175" viewBox="0 0 340 175"><path d="M20 80 L60 60 L95 25 L140 18 L175 40 L260 70 L300 95 L305 130 L60 150 L15 130Z" fill="#fff"/><path d="M25 85 L80 70 L110 35 L145 28 L170 48 L255 78 L295 100 L298 125 L70 142 L22 125Z" fill="url(#cr)"/><path d="M95 40 L110 30 L140 26 L150 48 L100 58Z" fill="#5a6a78"/><path d="M150 130 L320 110 L330 140 L170 160Z" fill="#bbb"/><circle cx="95" cy="140" r="30" fill="#1a1a1a"/><circle cx="95" cy="140" r="15" fill="#aaa"/><circle cx="250" cy="138" r="26" fill="#1a1a1a"/><circle cx="250" cy="138" r="12" fill="#aaa"/></svg>
 <div class="a" style="left:715px;top:325px;width:215px;height:165px;transform:rotate(8deg);background:#6b3318;border:4px solid #fff"><div class="a" style="left:10px;top:10px;width:150px;height:138px;background:linear-gradient(135deg,#d0cdc8,#6a6660 50%,#bdb8b0);border:6px solid #9a9a9a;border-radius:10px"></div></div>
</div></div>

</body></html>
